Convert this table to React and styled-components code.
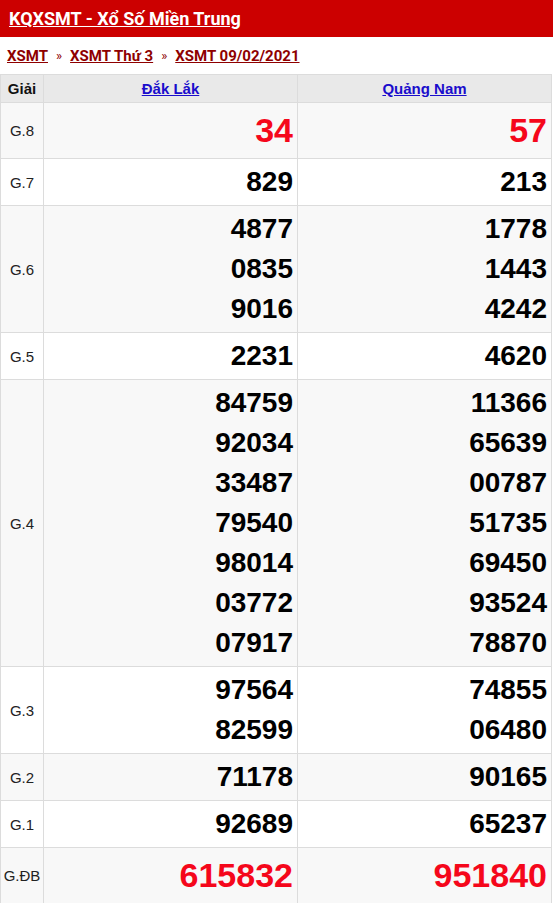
import React from 'react';
import styled, { createGlobalStyle } from 'styled-components';

const GlobalStyle = createGlobalStyle`
  html, body { margin: 0; padding: 0; background: #fff; }
  body { font-family: "Liberation Sans", Arial, sans-serif; }
`;

// --- STYLED COMPONENTS ---
const Page = styled.div`
  width: 553px;
  background: #fff;
`;
const TitleBar = styled.h2`
  margin: 0;
  height: 37px;
  background: #cc0000;
  display: flex;
  align-items: center;
  padding: 0 9px;
  box-sizing: border-box;
  font-family: Roboto, "Liberation Sans", sans-serif;
  font-size: 18px;
  font-weight: 700;
  a { color: #fff; text-decoration: underline; }
`;
const Crumbs = styled.div`
  height: 37px;
  display: flex;
  align-items: center;
  padding: 0 7px;
  gap: 8px;
  font-family: Roboto, "Liberation Sans", sans-serif;
  font-size: 15px;
  font-weight: 700;
  color: #8e0000;
  a { color: #8e0000; text-decoration: underline; }
`;
const Sep = styled.span`
  font-size: 13px;
  font-weight: 400;
`;
const Table = styled.table`
  width: 552px;
  border-collapse: collapse;
  table-layout: fixed;
  td, th { border: 1px solid #dcdcdc; }
`;
const HeadCell = styled.th`
  height: 27px;
  padding: 0;
  background: #e9e9e9;
  font-size: 15px;
  font-weight: 700;
  color: #111;
  a { color: #1a0dcc; text-decoration: underline; font-size: 15px; }
`;
const Row = styled.tr`
  background: ${p => (p.$alt ? '#f8f8f8' : '#fff')};
`;
const Label = styled.td`
  text-align: center;
  font-size: 15px;
  color: #222;
  padding: 0;
`;
const NumCell = styled.td`
  text-align: right;
  padding: 3px 4px 3px 0;
  vertical-align: middle;
`;
const Num = styled.div`
  font-weight: 700;
  font-size: ${p => (p.$big ? '34px' : '28px')};
  line-height: ${p => (p.$big ? '49px' : '40px')};
  color: ${p => (p.$red ? '#f5071b' : '#000')};
`;

const rows = [
  { g: 'G.8', a: ['34'], b: ['57'], red: true },
  { g: 'G.7', a: ['829'], b: ['213'] },
  { g: 'G.6', a: ['4877', '0835', '9016'], b: ['1778', '1443', '4242'] },
  { g: 'G.5', a: ['2231'], b: ['4620'] },
  {
    g: 'G.4',
    a: ['84759', '92034', '33487', '79540', '98014', '03772', '07917'],
    b: ['11366', '65639', '00787', '51735', '69450', '93524', '78870'],
  },
  { g: 'G.3', a: ['97564', '82599'], b: ['74855', '06480'] },
  { g: 'G.2', a: ['71178'], b: ['90165'] },
  { g: 'G.1', a: ['92689'], b: ['65237'] },
  { g: 'G.ĐB', a: ['615832'], b: ['951840'], red: true },
];

const Cell = ({ nums, red }) => (
  <NumCell>
    {nums.map(n => (
      <Num key={n} $red={red} $big={red}>{n}</Num>
    ))}
  </NumCell>
);

export default function App() {
  return (
    <Page>
      <GlobalStyle />
      <TitleBar><a href="#">KQXSMT - Xổ Số Miền Trung</a></TitleBar>
      <Crumbs>
        <a href="#">XSMT</a>
        <Sep>»</Sep>
        <a href="#">XSMT Thứ 3</a>
        <Sep>»</Sep>
        <a href="#">XSMT 09/02/2021</a>
      </Crumbs>
      <Table>
        <colgroup>
          <col style={{ width: 43 }} />
          <col />
          <col />
        </colgroup>
        <thead>
          <tr>
            <HeadCell>Giải</HeadCell>
            <HeadCell><a href="#">Đắk Lắk</a></HeadCell>
            <HeadCell><a href="#">Quảng Nam</a></HeadCell>
          </tr>
        </thead>
        <tbody>
          {rows.map((r, i) => (
            <Row key={r.g} $alt={i % 2 === 0}>
              <Label>{r.g}</Label>
              <Cell nums={r.a} red={r.red} />
              <Cell nums={r.b} red={r.red} />
            </Row>
          ))}
        </tbody>
      </Table>
    </Page>
  );
}
